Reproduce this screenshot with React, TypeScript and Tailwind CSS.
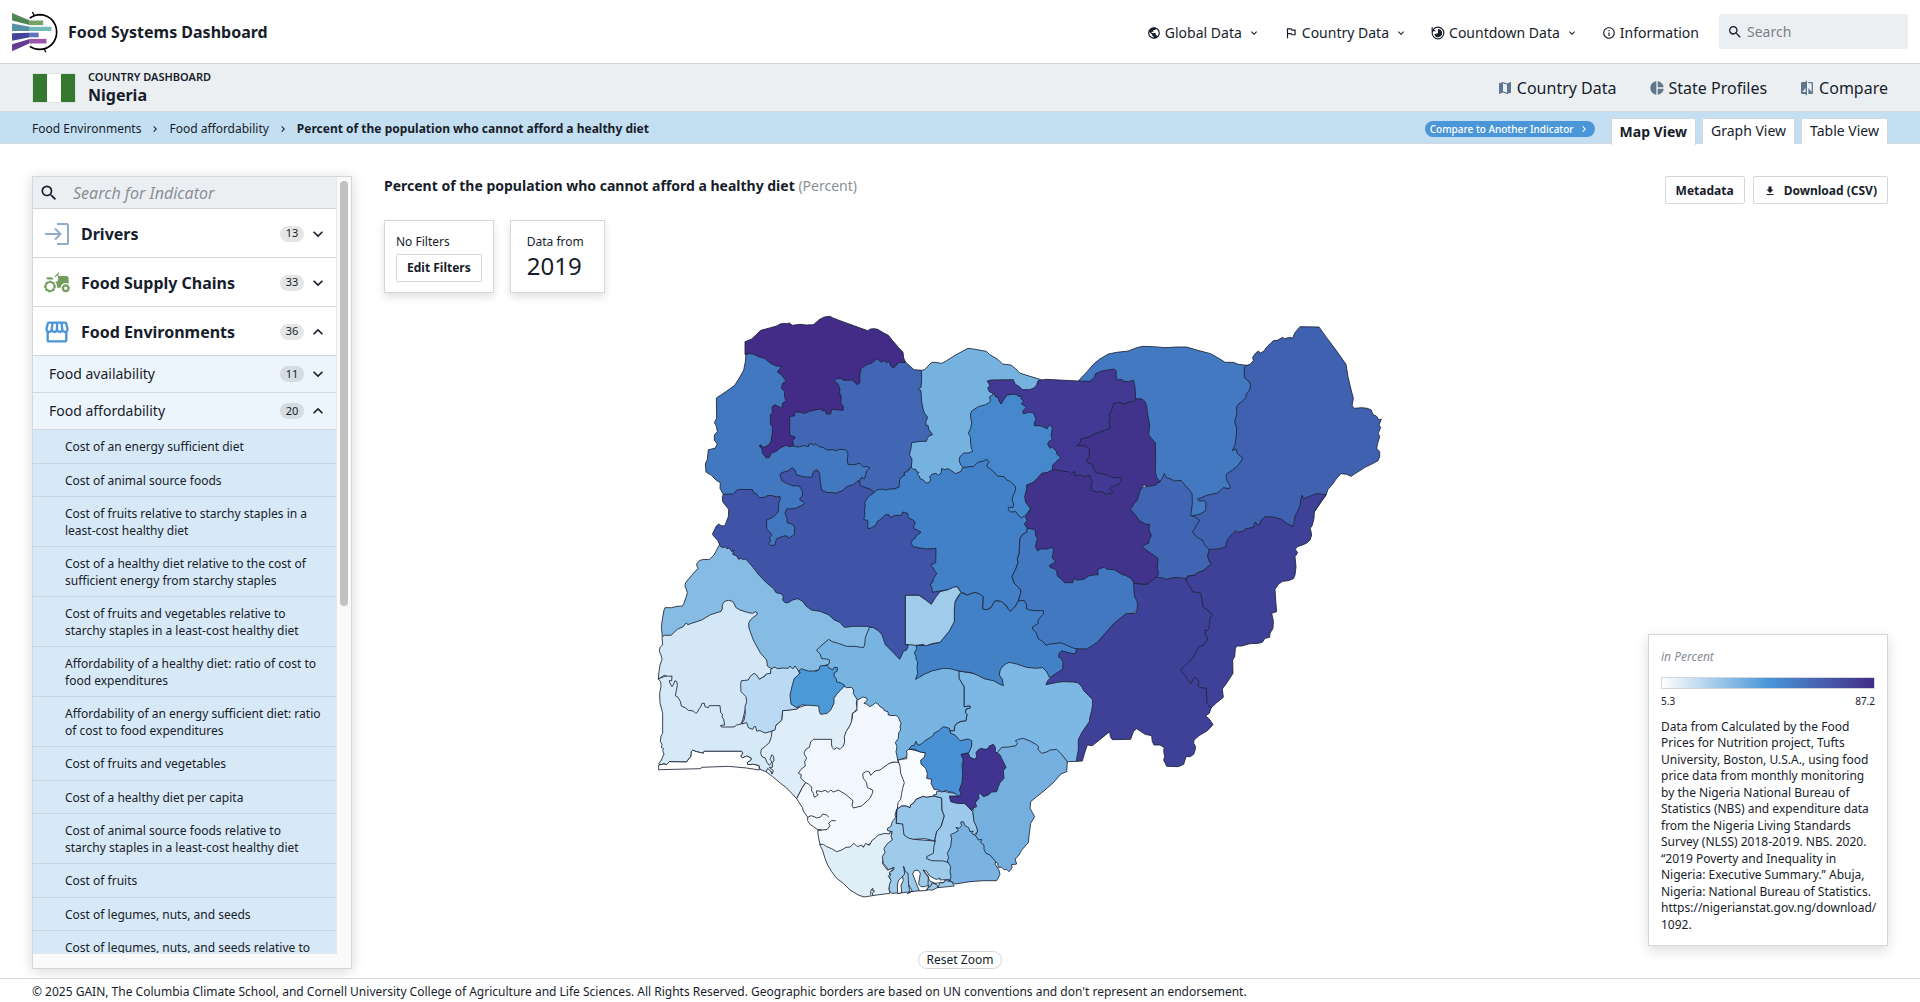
import React from "react";
import {
  MdPublic,
  MdOutlinedFlag,
  MdInfoOutline,
  MdSearch,
  MdMap,
  MdPieChart,
  MdCompare,
  MdExpandMore,
  MdExpandLess,
  MdChevronRight,
  MdAgriculture,
  MdOutlineStorefront,
  MdFileDownload,
} from "react-icons/md";

/* ---------- Map data ---------- */

type Sheet = "nw" | "ne" | "sw" | "se";

const sheetOffset: Record<Sheet, string> = {
  nw: "translate(0 0)",
  ne: "translate(960 0)",
  sw: "translate(0 780)",
  se: "translate(660 780)",
};

type Region = { name: string; fill: string; sheet: Sheet; points: string };

/* Later regions lie over earlier ones, so a shared border is exact on the later region only. */
const regions: Region[] = [
  { name: "Kwara", fill: "#86bce4", sheet: "sw", points: "236,-42 230,-30 222,-15 207,-1 190,-2 178,2 170,12 171,19 174,25 155,46 137,68 135,77 142,98 138,112 131,132 127,138 110,139 95,143 75,143 72,150 68,172 64,200 67,230 200,250 350,350 480,350 560,320 620,290 690,290 700,195 450,80 330,-20 260,-60" },
  { name: "Ogun", fill: "#d6e9f6", sheet: "sw", points: "55,357 62,365 63,380 59,400 60,430 64,444 68,460 68,520 63,528 61,545 66,553 64,562 71,566 68,572 72,582 64,600 56,612 62,615 72,611 80,614 88,605 140,606 148,594 153,590 154,575 158,571 170,575 190,580 192,574 305,574 308,580 302,588 307,594 320,588 333,594 333,600 322,607 323,614 340,613 357,617 360,628 378,635 400,640 420,560 410,500 320,480 200,400 90,345" },
  { name: "Oyo", fill: "#d4e7f7", sheet: "sw", points: "67,230 73,226 93,226 112,208 130,200 135,192 140,189 143,194 152,191 185,180 212,164 243,154 247,146 247,134 254,124 265,121 278,124 283,132 287,142 300,150 325,158 338,160 347,155 352,158 350,165 342,170 331,180 326,190 327,205 340,240 353,264 362,280 380,300 382,318 394,326 392,340 375,348 358,358 400,400 320,430 308,480 303,492 290,495 282,501 244,501 242,496 254,495 251,478 246,470 248,463 242,458 240,437 208,437 205,443 195,440 193,430 186,430 181,443 177,446 173,456 167,460 160,453 145,451 137,444 124,438 121,424 114,412 106,407 109,392 112,376 111,366 105,362 101,372 96,380 90,370 88,362 95,362 96,348 85,349 73,346 63,352 55,357 57,335 60,315 66,298 63,285 58,275 60,262 67,255" },
  { name: "Benue", fill: "#7db7e3", sheet: "se", points: "297,333 340,340 430,290 600,290 680,380 720,440 690,520 650,604 622,605 500,600 400,620 350,620 320,590 290,580 270,540 270,512 283,512 284,500 290,490 303,484 318,482 321,463 316,458 318,447 330,444 330,438 312,440 312,380 297,355" },
  { name: "Kogi", fill: "#78b4e2", sheet: "sw", points: "530,270 538,262 552,250 566,238 577,245 595,250 620,259 645,259 670,263 674,255 676,233 683,215 688,203 740,190 797,270 805,245 850,240 900,300 957,333 957,355 972,380 972,440 990,438 991,444 978,447 976,458 981,463 978,482 963,484 950,490 943,500 943,512 930,512 900,560 840,580 800,592 775,600 740,560 740,500 660,440 620,400 580,370 560,340 545,320 567,312 569,300 560,297 545,296 540,282" },
  { name: "Niger", fill: "#3f53a7", sheet: "nw", points: "250,583 247,590 248,605 258,618 266,628 265,650 258,668 254,678 244,677 236,672 229,678 217,703 224,712 234,722 240,738 248,743 256,740 260,746 268,744 275,755 282,750 278,763 290,768 296,778 303,775 310,779 317,777 328,789 340,803 355,823 380,849 400,865 408,878 422,881 430,888 428,900 435,908 445,908 458,900 474,896 489,905 497,917 514,930 540,934 565,944 574,952 583,960 600,967 607,976 614,982 640,979 680,979 700,983 715,992 725,1003 730,1016 736,1034 760,1058 779,1078 784,1068 790,1054 800,1050 805,1037 797,1033 797,886 837,886 874,913 905,872 950,800 900,600 780,580 704,577 660,545 600,540 450,480 350,540 260,570" },
  { name: "Nasarawa", fill: "#4381c7", sheet: "se", points: "167,357 173,340 171,322 173,305 168,298 168,288 163,280 170,266 168,257 200,256 240,247 265,215 283,185 283,130 303,97 322,105 343,97 360,100 370,110 368,145 380,149 393,143 404,121 418,125 425,121 440,140 451,154 465,140 475,122 530,100 620,160 620,240 660,250 660,300 630,335 568,352 560,335 548,323 530,325 500,322 470,312 447,307 437,312 425,322 420,332 418,345 427,358 430,377 420,373 400,362 375,357 355,347 335,338 318,336 297,333 270,326 250,325 215,333 195,342" },
  { name: "Zamfara", fill: "#4066b4", sheet: "nw", points: "797,187 822,209 845,211 870,250 900,350 900,420 840,480 814,502 797,515 777,561 727,580 704,577 697,572 692,568 674,562 660,556 659,543 640,520 500,480 430,480 430,420 440,320 550,300 560,200 680,150 790,180" },
  { name: "Katsina", fill: "#76b2e0", sheet: "nw", points: "845,211 854,209 864,198 875,187 885,187 905,190 920,182 945,166 984,145 1000,147 1039,154 1048,163 1073,178 1088,192 1113,195 1127,206 1139,219 1170,229 1200,238 1250,260 1200,330 1100,400 1050,520 900,580 820,540 814,502 816,477 808,464 813,446 815,428 840,424 859,424 862,415 867,408 878,404 872,396 866,388 864,376 857,376 858,364 863,352 854,340 850,330 845,306 843,272 834,268 843,262 845,240" },
  { name: "Kaduna", fill: "#4280c8", sheet: "nw", points: "814,502 820,508 828,508 829,515 837,517 832,523 838,528 840,536 850,540 857,548 865,549 872,540 869,530 875,523 887,520 896,526 903,520 905,505 912,509 925,506 947,521 963,514 966,505 985,495 1014,470 1050,460 1100,480 1180,560 1171,627 1200,660 1162,685 1160,697 1148,703 1140,715 1138,745 1138,760 1132,775 1134,788 1128,805 1116,830 1123,850 1135,862 1142,870 1142,880 1135,902 1125,920 1118,926 1111,934 1104,925 1098,915 1085,905 1074,901 1064,903 1053,922 1040,929 1028,927 1030,890 1015,880 1003,877 982,885 972,880 963,877 952,860 935,867 905,872 877,877 876,865 871,852 878,848 880,838 890,820 884,812 879,803 872,795 887,788 888,745 858,747 835,743 820,740 813,730 816,722 826,714 829,707 843,697 833,690 822,687 821,679 826,667 818,659 808,655 804,650 803,640 788,636 785,646 765,646 752,653 747,644 737,644 719,660 712,664 708,675 695,683 684,687 683,662 671,658 675,645 673,630 676,620 674,608 685,590 704,577 710,570 727,567 735,570 750,567 770,566 777,561 779,539 788,528 794,526 792,518 803,514" },
  { name: "Kano", fill: "#4588cc", sheet: "nw", points: "1058,285 1049,290 1051,305 1037,314 1015,320 995,333 991,345 995,368 992,385 985,400 991,410 992,430 994,444 998,454 985,459 971,459 961,468 957,480 962,495 972,503 985,500 1000,500 1014,487 1030,483 1041,478 1047,485 1040,498 1048,505 1061,515 1072,528 1092,530 1100,540 1110,544 1126,559 1127,570 1120,585 1116,600 1121,612 1119,623 1107,621 1104,629 1112,636 1128,635 1134,645 1145,654 1157,645 1171,627 1200,620 1300,560 1300,400 1250,300 1150,276 1120,262 1060,255" },
  { name: "Plateau", fill: "#4178c0", sheet: "ne", points: "202,685 200,697 188,703 180,715 178,745 178,760 172,775 174,788 168,805 156,830 163,850 175,862 182,870 182,880 175,902 193,902 200,915 199,926 208,930 225,932 250,932 250,943 243,950 234,960 235,970 217,981 218,988 228,997 232,1008 235,1017 248,1024 258,1036 265,1033 303,1028 325,1038 345,1046 400,1060 560,900 540,830 400,780 250,670" },
  { name: "Taraba", fill: "#3f4198", sheet: "se", points: "822,70 860,73 895,44 920,40 977,30 1100,100 1080,200 1050,300 1080,400 1053,444 1048,460 1037,467 1050,480 1059,494 1042,512 1017,527 1002,540 1001,550 1006,558 1006,568 1001,583 990,590 978,590 971,613 955,620 920,619 911,600 914,590 911,572 913,563 900,555 882,555 877,545 875,527 855,523 830,506 820,515 812,538 757,539 751,530 749,515 723,536 697,557 682,555 675,575 667,603 649,604 652,585 655,570 655,540 663,522 672,508 688,485 690,470 695,452 698,433 697,418 672,393 665,380 655,369 640,366 610,365 592,367 558,374 563,362 578,347 608,328 609,308 604,295 596,292 597,280 606,272 615,275 620,277 645,282 650,266 680,267 712,247 760,192 798,161 826,160 832,148 832,125 824,110 822,95" },
  { name: "Borno", fill: "#4060b0", sheet: "ne", points: "860,196 870,193 880,182 878,172 888,158 896,153 900,160 912,153 920,141 930,132 940,122 952,121 968,112 974,116 990,112 998,115 1004,99 1020,80 1077,81 1100,113 1130,153 1158,193 1164,230 1172,264 1180,295 1176,318 1184,325 1205,323 1222,325 1234,330 1238,343 1250,349 1257,360 1264,357 1257,375 1262,382 1255,400 1259,410 1253,430 1250,445 1259,455 1259,470 1254,482 1240,490 1215,502 1173,529 1160,523 1143,521 1130,535 1118,552 1104,568 1098,585 1060,640 1030,680 900,720 820,780 745,755 690,720 680,650 700,600 760,560 800,400 830,220" },
  { name: "Yobe", fill: "#4279c1", sheet: "ne", points: "355,243 381,215 400,193 418,178 445,162 470,157 505,153 530,143 548,139 580,140 615,143 650,141 680,141 710,150 752,161 780,177 795,187 820,187 835,193 860,196 853,202 853,233 866,243 872,255 868,272 858,283 858,292 845,305 833,315 829,325 831,340 824,365 830,385 829,405 825,435 817,452 828,447 833,462 848,473 842,486 830,500 818,510 800,522 798,532 802,545 811,558 808,566 790,563 783,570 772,579 740,586 712,598 718,603 732,602 738,608 737,632 720,642 693,649 660,660 600,570 500,500 500,350 450,280 380,300" },
  { name: "Gombe", fill: "#4066b3", sheet: "ne", points: "600,545 608,532 613,521 619,533 630,536 644,543 663,541 672,552 680,561 690,573 696,580 697,610 692,647 707,652 718,660 716,666 708,677 705,686 697,693 702,703 713,713 727,720 735,737 748,748 748,760 743,765 746,780 754,793 740,803 733,811 712,819 705,825 683,829 677,836 660,833 640,833 620,838 610,834 600,833 580,830 530,745 490,640 530,570" },
  { name: "Adamawa", fill: "#3f4198", sheet: "ne", points: "1098,585 1082,606 1063,635 1062,655 1057,675 1051,685 1055,705 1050,720 1042,728 1030,734 1012,740 1006,748 1013,758 1005,770 1008,800 1005,825 1000,836 985,842 968,844 956,852 945,868 947,900 950,935 935,940 940,962 939,985 930,1000 929,1012 915,1015 907,1027 895,1030 870,1031 845,1038 830,1038 826,1046 824,1070 818,1080 819,1120 803,1145 787,1167 790,1192 770,1208 753,1224 741,1210 739,1165 722,1163 714,1158 717,1145 710,1135 702,1132 698,1142 692,1151 675,1127 662,1110 680,1092 698,1075 712,1047 718,1038 728,1038 742,1020 742,1012 735,1005 737,990 742,992 747,985 750,955 758,944 748,935 729,920 727,905 722,880 715,878 698,875 690,860 679,845 679,836 683,829 705,825 712,819 733,811 740,803 754,793 746,780 743,765 748,748 775,747 797,741 799,728 805,715 827,692 832,697 850,694 855,687 880,682 885,666 897,677 904,660 915,650 940,651 965,658 980,670 998,679 1003,665 1005,648 1010,640 1020,618 1022,600 1026,586 1031,596 1070,581" },
  { name: "Jigawa", fill: "#413993", sheet: "ne", points: "82,243 93,240 160,239 165,252 178,260 188,269 210,269 223,263 230,255 234,242 258,238 355,243 390,244 403,232 407,221 425,213 445,210 462,207 469,213 468,225 471,240 483,238 492,244 505,245 520,241 525,260 527,300 520,400 500,540 480,595 440,605 380,590 300,530 277,509 278,495 288,485 302,472 290,462 290,455 276,440 270,445 263,432 266,425 277,418 273,405 277,385 272,376 266,376 262,386 240,377 223,377 223,368 228,358 223,345 220,338 205,337 196,340 189,340 189,332 199,322 184,311 190,306 188,300 182,296 187,290 173,288 170,283 155,283 141,285 132,298 123,312 117,303 115,293 106,290 103,282 88,275 83,263 90,258 86,250" },
  { name: "Bauchi", fill: "#41338c", sheet: "ne", points: "277,510 262,517 245,520 232,535 220,547 200,555 200,567 194,590 197,607 212,627 205,640 196,650 201,662 193,672 202,685 218,687 227,693 226,705 232,715 226,740 233,753 240,747 262,747 270,743 281,745 280,752 277,775 287,785 268,797 272,803 283,806 290,813 292,828 305,838 314,848 338,848 342,835 350,840 372,838 386,828 400,825 415,824 413,812 417,806 433,802 442,808 463,809 483,822 500,828 513,835 522,850 545,852 560,853 578,840 596,824 592,805 594,775 570,758 547,742 556,733 566,730 567,720 574,707 567,690 568,673 558,673 538,662 525,643 511,628 523,610 532,600 538,580 542,567 553,555 562,559 585,556 592,550 600,545 590,533 586,515 587,470 586,428 577,418 566,405 569,375 563,345 560,320 556,306 546,297 527,296 522,304 500,308 495,313 478,307 461,311 457,325 447,345 450,355 447,368 450,385 437,390 400,403 388,411 360,418 363,424 350,437 375,438 388,447 388,470 380,480 385,490 397,493 401,507 408,518 425,522 440,525 455,532 485,534 482,547 468,556 458,560 448,568 460,577 455,583 445,578 438,584 425,574 412,576 395,572 393,560 397,545 388,526 372,530 360,524 347,528 344,514 333,523 325,515 310,514 290,509" },
  { name: "Federal Capital Territory", fill: "#a0cbeb", sheet: "nw", points: "797,886 837,886 857,900 874,913 887,892 900,875 925,869 940,862 952,860 956,868 963,877 953,890 945,905 943,930 943,965 928,993 900,1027 875,1031 857,1038 850,1033 830,1036 797,1033" },
  { name: "Kebbi", fill: "#4178c0", sheet: "nw", points: "318,163 316,185 311,211 298,234 284,256 255,277 229,294 230,355 223,368 229,378 232,395 223,405 223,420 232,432 225,445 205,449 202,478 196,492 198,516 214,526 228,540 241,548 240,565 246,576 250,583 280,582 291,570 303,568 338,569 340,578 349,581 357,593 373,592 382,587 394,586 411,591 419,588 421,597 416,610 415,636 400,651 380,660 380,688 393,700 395,707 388,713 392,722 386,732 391,736 404,736 410,716 425,710 438,707 448,714 463,704 464,681 455,672 441,668 441,655 435,640 440,627 463,626 482,618 494,611 490,605 480,601 480,595 487,588 487,573 478,558 457,557 440,550 426,543 420,525 424,518 444,513 457,503 466,512 469,524 480,527 486,530 515,532 521,514 531,509 539,520 541,547 545,570 560,577 589,579 607,572 620,560 640,554 653,543 660,541 664,532 673,536 676,528 680,513 690,504 681,499 670,501 660,490 642,494 624,494 622,480 624,460 617,449 598,448 590,452 577,449 560,450 551,443 535,439 527,430 523,436 515,431 506,433 505,440 493,437 474,441 461,438 440,425 430,340 470,300 460,220 440,180 340,145" },
  { name: "Sokoto", fill: "#432c87", sheet: "nw", points: "315,163 315,125 335,117 350,103 362,91 385,85 410,78 420,72 433,70 440,71 448,69 457,76 480,73 500,75 520,74 530,66 537,59 553,51 570,49 577,53 600,62 625,71 655,82 683,92 692,87 702,86 713,88 730,98 745,106 757,121 775,142 789,157 791,174 797,187 785,188 777,186 770,195 759,204 752,197 747,183 740,188 733,182 723,187 718,181 710,177 697,188 681,194 663,205 662,215 659,225 660,248 652,254 637,240 612,241 602,235 591,235 582,244 594,252 600,268 598,276 604,292 602,308 610,320 609,331 587,329 576,328 571,342 559,342 555,330 548,333 545,327 530,329 509,334 493,340 477,336 463,337 463,348 449,349 449,404 466,412 458,422 461,438 448,440 439,436 420,444 409,454 393,460 389,472 379,474 367,459 366,447 358,438 361,434 371,442 386,435 393,424 397,398 397,380 391,372 391,345 397,338 396,321 404,314 415,319 425,325 428,309 438,302 433,289 434,275 424,264 428,250 438,243 423,223 412,216 425,199 409,198 392,190 373,175 356,170 342,163 328,161" },
  { name: "Lagos", fill: "#ffffff", sheet: "sw", points: "56,628 56,615 72,612 80,614 88,605 140,606 148,594 153,590 154,575 158,571 170,575 190,580 192,574 305,574 308,580 302,588 307,594 320,588 333,594 333,600 322,607 323,614 340,613 357,617 358,630 320,624 265,619 185,622 183,625" },
  { name: "Ondo", fill: "#dfedf8", sheet: "sw", points: "396,515 408,495 425,480 428,452 465,447 540,420 605,375 620,383 635,382 641,390 640,400 652,420 649,430 652,445 644,455 637,460 635,490 625,505 617,520 615,550 700,600 600,680 497,668 487,683 470,716 455,700 440,684 418,667 398,650 378,635 383,625 392,633 396,642 400,632 388,622 397,622 397,608 402,603 401,590 396,584 390,598 396,606 388,616 380,606 376,594 366,590 362,580 364,568 372,562 388,548 394,530" },
  { name: "Osun", fill: "#b9daf2", sheet: "sw", points: "305,362 325,360 330,350 342,340 350,345 358,358 368,352 375,348 378,342 392,340 392,332 394,326 405,321 412,326 430,324 445,325 450,318 458,327 465,318 476,333 500,400 472,447 450,450 428,452 425,480 415,490 408,495 405,510 390,515 375,519 360,512 350,513 347,500 342,500 338,508 325,503 320,488 305,492 312,480 316,460 315,440 320,425 318,410 303,395 302,375" },
  { name: "Ekiti", fill: "#4c99d8", sheet: "sw", points: "476,333 484,326 495,330 505,333 530,333 538,328 540,318 562,316 566,323 578,330 582,322 592,323 592,333 583,338 582,348 588,355 590,365 605,370 614,376 608,384 600,392 590,403 582,415 582,430 572,450 562,460 542,463 538,455 536,438 510,436 485,435 470,443 453,432 450,405 457,375 463,355 475,345 480,338" },
  { name: "Delta", fill: "#f4f9fe", sheet: "sw", points: "497,668 487,683 470,716 480,732 487,742 490,753 503,772 503,782 510,793 520,800 532,808 545,810 533,812 535,830 540,853 590,880 660,865 760,820 790,740 800,660 775,603 700,620 600,660" },
  { name: "Edo", fill: "#f2f7ff", sheet: "sw", points: "652,420 660,416 668,411 680,414 682,420 672,430 682,433 688,440 697,436 707,428 716,434 722,442 730,445 733,452 744,455 745,465 756,467 768,466 775,472 783,490 780,500 782,510 776,518 775,535 766,548 771,560 768,575 775,607 760,606 748,610 735,619 720,630 705,633 692,646 688,636 680,633 668,641 670,655 680,668 682,683 698,690 698,698 690,715 665,738 640,744 636,735 639,722 630,714 615,702 595,690 580,696 572,690 565,697 555,691 545,695 530,692 529,700 535,704 523,712 520,700 514,690 516,682 505,672 497,668 482,654 484,644 475,640 483,628 496,618 494,605 500,595 492,580 497,568 508,562 512,546 520,538 575,538 574,552 577,563 582,569 590,563 600,568 610,558 614,545 613,530 618,515 625,505 632,492 637,475 638,460 650,452" },
  { name: "Bayelsa", fill: "#e0eef8", sheet: "sw", points: "540,853 550,853 560,860 575,866 590,875 605,870 618,862 630,861 642,850 652,860 665,855 670,862 677,850 688,856 697,840 705,835 715,825 735,820 748,822 752,812 760,850 735,880 727,910 742,930 760,922 745,950 755,960 747,985 750,1000 710,1005 672,1011 655,1005 630,990 610,970 590,955 575,935 563,915 555,895 548,872" },
  { name: "Anambra", fill: "#f8fcff", sheet: "se", points: "115,600 125,598 140,596 141,580 139,573 148,567 200,580 215,660 245,695 222,708 200,712 190,709 180,713 168,718 162,728 152,735 150,743 138,738 125,738 112,747 114,728 122,718 125,700 128,685 133,668 122,640 120,620" },
  { name: "Cross River", fill: "#74afe0", sheet: "se", points: "415,574 425,562 445,561 468,557 473,549 466,543 475,538 490,535 510,543 528,553 536,560 534,568 545,580 560,576 570,570 590,568 605,583 622,605 620,635 603,642 580,668 555,690 530,710 512,725 510,745 524,770 512,790 508,820 505,848 485,870 475,888 465,897 470,912 455,914 456,924 447,935 440,928 433,930 425,922 415,922 413,910 405,905 380,900 340,840 353,813 340,785 338,755 360,650" },
  { name: "Rivers", fill: "#9fcbeb", sheet: "se", points: "110,748 105,765 107,772 97,785 92,800 82,805 83,812 97,815 93,828 97,840 83,850 72,865 75,877 67,890 70,910 80,922 84,930 102,922 101,930 88,937 93,945 88,950 93,962 88,975 87,990 95,1000 130,998 178,992 200,985 235,965 280,962 285,900 300,860 226,843 160,838 125,790 110,790" },
  { name: "Imo", fill: "#96c6ea", sheet: "se", points: "112,747 125,738 138,738 150,743 152,735 162,728 168,718 180,713 190,709 200,712 222,708 245,714 246,750 253,768 243,800 230,815 224,843 195,836 160,838 145,834 132,825 128,792 110,790" },
  { name: "Abia", fill: "#9dcaec", sheet: "se", points: "226,843 222,858 220,880 200,890 200,896 215,902 250,903 266,908 290,880 320,850 353,813 348,797 342,785 338,755 315,731 290,700 268,698 245,692 230,695 230,703 220,705 222,708 245,714 246,750 253,768 243,800 230,815 224,843" },
  { name: "Akwa Ibom", fill: "#7ab3e1", sheet: "se", points: "272,825 275,835 272,860 262,880 266,893 262,903 272,920 270,935 273,950 270,962 285,972 330,965 370,962 410,962 420,943 416,928 405,913 407,905 390,885 378,880 372,868 372,855 362,848 365,838 355,840 348,828 335,820 340,813 330,815 326,803 315,797 310,785 302,786 305,797 298,805 288,802 295,812 285,818" },
  { name: "Ebonyi", fill: "#413490", sheet: "se", points: "303,583 325,580 330,592 345,598 350,590 348,578 352,572 362,565 375,568 384,566 388,558 400,553 406,562 406,575 420,585 425,595 438,622 430,632 432,655 420,668 415,680 410,695 395,696 385,705 370,710 360,700 355,705 357,715 346,728 350,740 340,743 335,752 325,740 315,731 290,730 272,725 268,708 300,708 298,690 308,665 307,625 310,600" },
  { name: "Enugu", fill: "#4891d4", sheet: "se", points: "148,567 155,557 163,556 168,544 174,556 185,551 198,540 218,528 222,520 235,513 250,500 268,505 272,520 285,525 300,542 325,537 335,542 335,558 327,578 303,583 310,600 306,612 308,640 306,668 298,690 303,700 297,710 280,697 268,696 260,692 245,696 235,690 222,688 213,670 215,658 200,655 202,640 197,625 183,612 182,600 193,592 196,578 180,576 165,568" },
];

/* Lagoons, inlets and islands on the coast of the delta. */
const water: string[] = [
  "M113 1000 112 975 116 960 128 950 130 962 123 975 125 997Z",
  "M143 1000 150 998 146 975 156 992Z",
  "M178 992 168 968 158 942 163 932 174 930 181 940 178 957 176 972 183 980 196 980 206 974 202 990Z",
  "M190 930 200 934 208 947 225 957 232 958 240 954 240 960 268 958 264 966 225 970 208 962 205 950Z",
];
const creeks: string[] = [
  "M127 950 134 942 131 920M131 920 136 934 144 940 146 975",
  "M192 934 205 952 204 972",
];
const islands: string[] = [
  "M200 988 214 976 216 968 232 975 234 982 218 990Z",
  "M234 982 240 968 252 968 254 961 275 965 282 977Z",
];
const inlets: string[] = [
  "M503 772 513 767 525 771 530 774 542 771 548 762 560 765 566 771",
  "M586 782 575 782 566 790 570 797 562 808 545 810",
  "M692 1003 693 990 699 985 698 992 704 993 697 999 698 1005",
];

function NigeriaMap() {
  return (
    <svg
      viewBox="-768 21 3792 1800"
      className="block h-auto w-full"
      role="img"
      aria-label="Map of Nigerian states"
    >
      <g stroke="#1c2536" strokeOpacity="0.85" strokeWidth="3" strokeLinejoin="round" strokeLinecap="round">
        {regions.map((r) => (
          <polygon key={r.name} points={r.points} fill={r.fill} transform={sheetOffset[r.sheet]}>
            <title>{r.name}</title>
          </polygon>
        ))}
        <g transform={sheetOffset.se}>
          {water.map((d) => (
            <path key={d} d={d} fill="#ffffff" />
          ))}
          {creeks.map((d) => (
            <path key={d} d={d} fill="none" />
          ))}
          {islands.map((d) => (
            <path key={d} d={d} fill="#9fcbeb" />
          ))}
        </g>
        <g transform={sheetOffset.sw} fill="none">
          {inlets.map((d) => (
            <path key={d} d={d} />
          ))}
        </g>
      </g>
    </svg>
  );
}

/* ---------- Icons ---------- */

function Logo() {
  return (
    <svg viewBox="36 30 140 128" className="h-[42px] w-[46px]" aria-hidden="true">
      <path d="M36 36 90 59V73L36 59Z" fill="#4d8652" />
      <path d="M36 68 90 78V91H36Z" fill="#558fa8" />
      <path d="M36 98 90 96V110L36 121Z" fill="#45449a" />
      <path d="M36 131 90 115V128L36 153Z" fill="#643c94" />
      <path d="M90 59h41v14H90z" fill="#76a361" />
      <path d="M90 78h66v13H90z" fill="#71bcb8" />
      <path d="M90 96h27v14H90z" fill="#5d74bb" />
      <path d="M90 115h51v14H90z" fill="#9a57ab" />
      <path
        d="M90 52C100 44 111 41 122 41C152 43 172 66 172 94C172 124 150 147 120 147C108 147 98 144 90 138"
        fill="none"
        stroke="#000"
        strokeWidth="5"
      />
      <path d="M105 46 98 33M134 145 139 156" fill="none" stroke="#000" strokeWidth="4" />
    </svg>
  );
}

function CountdownIcon() {
  return (
    <svg viewBox="0 0 24 24" className="h-[14px] w-[14px]" fill="none" stroke="currentColor" aria-hidden="true">
      <circle cx="12" cy="12" r="10" strokeWidth="2" />
      <path d="M2 2v6h6" strokeWidth="2" />
      <path d="M12 5a7 7 0 1 1-6.500 9.500L12 12Z" fill="currentColor" stroke="none" />
      <path d="M12 6V12L7 8A6.500 6.500 0 0 1 12 6Z" fill="#ffffff" stroke="none" />
    </svg>
  );
}

function DriversIcon() {
  return (
    <svg viewBox="0 0 24 22" className="h-[22px] w-6" fill="none" stroke="#8dadca" strokeWidth="2" aria-hidden="true">
      <path d="M12 1H22a1 1 0 0 1 1 1V20a1 1 0 0 1-1 1H12" />
      <path d="M0 11H15M10 5.500 15.500 11 10 16.500" />
    </svg>
  );
}

/* ---------- Header ---------- */

const mainNav = [
  { label: "Global Data", icon: <MdPublic className="size-[14px]" />, menu: true },
  { label: "Country Data", icon: <MdOutlinedFlag className="size-[14px]" />, menu: true },
  { label: "Countdown Data", icon: <CountdownIcon />, menu: true },
  { label: "Information", icon: <MdInfoOutline className="size-[14px]" />, menu: false },
];

function Header() {
  return (
    <header className="flex h-16 shrink-0 items-center justify-between border-b border-[#d3d8df] px-3">
      <a href="#home" className="flex items-center gap-[10px] text-base font-bold">
        <Logo />
        Food Systems Dashboard
      </a>
      <div className="flex items-center gap-5">
        <nav className="flex items-center gap-6 pt-[2px]">
          {mainNav.map((item) => (
            <a key={item.label} href="#nav" className="flex items-center gap-1 text-sm">
              {item.icon}
              {item.label}
              {item.menu && <MdExpandMore className="ml-[2px] size-3" />}
            </a>
          ))}
        </nav>
        <label className="flex h-[35px] w-[189px] items-center gap-1 rounded-xs bg-[#ebeff2] pl-2">
          <MdSearch className="size-4 shrink-0" />
          <input
            type="text"
            aria-label="Search"
            placeholder="Search"
            className="w-full bg-transparent pt-px text-sm outline-none placeholder:text-[#7b7f86]"
          />
        </label>
      </div>
    </header>
  );
}

const countryNav = [
  { label: "Country Data", icon: MdMap },
  { label: "State Profiles", icon: MdPieChart },
  { label: "Compare", icon: MdCompare },
];

function CountryBar() {
  return (
    <div className="flex h-12 shrink-0 items-center justify-between border-b border-[#d3d8df] bg-[#ebeff2] px-8">
      <div className="flex items-center gap-3">
        <div className="flex h-[30px] w-11 border border-[#dde3e8]">
          <div className="flex-1 bg-[#35782f]" />
          <div className="flex-1 bg-white" />
          <div className="flex-1 bg-[#35782f]" />
        </div>
        <div className="pb-px">
          <p className="text-[11px] leading-4 font-semibold">COUNTRY DASHBOARD</p>
          <h1 className="text-base leading-5 font-bold">Nigeria</h1>
        </div>
      </div>
      <nav className="flex items-center gap-8">
        {countryNav.map(({ label, icon: Icon }) => (
          <a key={label} href="#section" className="flex items-center gap-1 text-base">
            <Icon className="size-4 text-[#5f778d]" />
            {label}
          </a>
        ))}
      </nav>
    </div>
  );
}

function IndicatorBar() {
  return (
    <div className="flex h-8 shrink-0 items-center justify-between border-b border-[#d3d8df] bg-[#c4dff2] px-8 pt-[2px]">
      <nav aria-label="Breadcrumb" className="flex items-center gap-2 text-xs">
        <a href="#env">Food Environments</a>
        <MdChevronRight className="size-3" />
        <a href="#afford">Food affordability</a>
        <MdChevronRight className="size-3" />
        <span className="font-bold">Percent of the population who cannot afford a healthy diet</span>
      </nav>
      <div className="flex items-center gap-4">
        <button className="flex h-4 items-center gap-1 rounded-full bg-[#4a96d8] px-[5px] text-[10px] leading-4 font-medium text-white">
          Compare to Another Indicator
          <MdChevronRight className="size-3" />
        </button>
        <div className="-mb-[5px] flex gap-[6px] text-sm">
          <button className="h-[27px] rounded-t-xs border border-b-0 border-[#d3d8df] bg-white px-2 font-bold">
            Map View
          </button>
          <button className="h-[26px] rounded-t-xs border border-b-0 border-[#d3d8df] bg-white px-2">
            Graph View
          </button>
          <button className="h-[26px] rounded-t-xs border border-b-0 border-[#d3d8df] bg-white px-2">
            Table View
          </button>
        </div>
      </div>
    </div>
  );
}

/* ---------- Sidebar ---------- */

const indicators = [
  "Cost of an energy sufficient diet",
  "Cost of animal source foods",
  "Cost of fruits relative to starchy staples in a least-cost healthy diet",
  "Cost of a healthy diet relative to the cost of sufficient energy from starchy staples",
  "Cost of fruits and vegetables relative to starchy staples in a least-cost healthy diet",
  "Affordability of a healthy diet: ratio of cost to food expenditures",
  "Affordability of an energy sufficient diet: ratio of cost to food expenditures",
  "Cost of fruits and vegetables",
  "Cost of a healthy diet per capita",
  "Cost of animal source foods relative to starchy staples in a least-cost healthy diet",
  "Cost of fruits",
  "Cost of legumes, nuts, and seeds",
  "Cost of legumes, nuts, and seeds relative to",
];

function Count({ value, open }: { value: number; open: boolean }) {
  const Arrow = open ? MdExpandLess : MdExpandMore;
  return (
    <span className="flex items-center gap-1">
      <span className="flex h-4 w-6 items-center justify-center rounded-full bg-black/10 text-[11px] font-normal">
        {value}
      </span>
      <Arrow className="size-5" />
    </span>
  );
}

type GroupProps = { label: string; count: number; open?: boolean; icon: React.ReactNode };

function Group({ label, count, open = false, icon }: GroupProps) {
  return (
    <button className="flex h-[49px] w-full items-center border-b border-[#d3d8df] bg-white pt-px pr-2 pl-[10px] text-left text-base font-bold">
      <span className="flex w-[38px] shrink-0 items-center">{icon}</span>
      <span className="flex-1 pt-px">{label}</span>
      <Count value={count} open={open} />
    </button>
  );
}

function SubGroup({ label, count, open = false }: { label: string; count: number; open?: boolean }) {
  return (
    <button className="flex h-[37px] w-full items-center justify-between border-b border-[#d3d8df] bg-[#ecf4fc] pr-2 pl-4 text-left text-sm">
      {label}
      <Count value={count} open={open} />
    </button>
  );
}

function Sidebar() {
  return (
    <aside className="flex w-80 shrink-0 border border-[#d3d8df] bg-[#fafafa] pb-[14px] shadow-[0_2px_12px_rgba(0,0,0,0.16)]">
      <div className="min-w-0 flex-1 overflow-hidden border-r border-b border-[#e3e6ea]">
        <label className="flex h-8 items-center gap-3 border-b border-[#d3d8df] bg-[#ebeff2] pl-[6px]">
          <MdSearch className="size-5 shrink-0" />
          <input
            type="text"
            aria-label="Search for Indicator"
            placeholder="Search for Indicator"
            className="w-full bg-transparent pl-[2px] text-base italic outline-none placeholder:text-[#8a8f98]"
          />
        </label>
        <Group label="Drivers" count={13} icon={<span className="pl-[2px]"><DriversIcon /></span>} />
        <Group
          label="Food Supply Chains"
          count={33}
          icon={<MdAgriculture className="size-7 text-[#729d5c]" />}
        />
        <Group
          label="Food Environments"
          count={36}
          open
          icon={<MdOutlineStorefront className="size-7 text-[#4a96d8]" />}
        />
        <SubGroup label="Food availability" count={11} />
        <SubGroup label="Food affordability" count={20} open />
        <ul>
          {indicators.map((name) => (
            <li key={name} className="border-b border-[#c8d5e1] bg-[#d7e8f6]">
              <a href="#indicator" className="block pt-[9px] pr-3 pb-[7px] pl-8 text-xs leading-snug">
                {name}
              </a>
            </li>
          ))}
        </ul>
      </div>
      <div className="w-[14px] shrink-0 pt-1 pl-[3px]">
        <div className="h-[55%] w-2 rounded-full bg-[#c1c1c1]" />
      </div>
    </aside>
  );
}

/* ---------- Main content ---------- */

function Legend() {
  return (
    <section className="mb-[23px] w-60 shrink-0 self-end border border-[#d3d8df] bg-white p-3 shadow-[0_4px_12px_rgba(0,0,0,0.14)]">
      <p className="pt-[2px] text-xs leading-4 text-[#868c96] italic">in Percent</p>
      <div className="mt-3 h-3 border border-[#d3d8df] bg-[linear-gradient(to_right,#ffffff,#4a96d8_50%,#432c87)]" />
      <div className="mt-1 flex justify-between text-[10px] leading-4">
        <span>5.3</span>
        <span>87.2</span>
      </div>
      <p className="mt-[10px] text-xs leading-snug">
        Data from Calculated by the Food Prices for Nutrition project, Tufts University, Boston, U.S.A., using food
        price data from monthly monitoring by the Nigeria National Bureau of Statistics (NBS) and expenditure data from
        the Nigeria Living Standards Survey (NLSS) 2018-2019. NBS. 2020. “2019 Poverty and Inequality in Nigeria:
        Executive Summary.” Abuja, Nigeria: National Bureau of Statistics. https://nigerianstat.gov.ng/download/
        <wbr />
        1092.
      </p>
    </section>
  );
}

function Content() {
  return (
    <main className="flex min-w-0 flex-1 flex-col">
      <div className="flex h-7 shrink-0 items-start justify-between">
        <h2 className="text-sm leading-5 font-bold">
          Percent of the population who cannot afford a healthy diet{" "}
          <span className="font-normal text-[#8a8f98]">(Percent)</span>
        </h2>
        <div className="flex gap-2">
          <button className="h-7 rounded-xs border border-[#d3d8df] bg-white px-[10px] pt-px text-xs font-bold">
            Metadata
          </button>
          <button className="flex h-7 items-center gap-2 rounded-xs border border-[#d3d8df] bg-white px-[10px] pt-px text-xs font-bold">
            <MdFileDownload className="size-3" />
            Download (CSV)
          </button>
        </div>
      </div>
      <div className="mt-4 flex shrink-0 gap-4">
        <div className="h-[73px] border border-[#d3d8df] px-[11px] pt-[13px] shadow-[0_4px_8px_rgba(0,0,0,0.12)]">
          <p className="text-xs leading-4">No Filters</p>
          <button className="mt-1 h-7 rounded-xs border border-[#d3d8df] bg-white px-[10px] text-xs font-bold">
            Edit Filters
          </button>
        </div>
        <div className="h-[73px] border border-[#d3d8df] pt-[13px] pr-5 pl-4 shadow-[0_4px_8px_rgba(0,0,0,0.12)]">
          <p className="text-xs leading-4">Data from</p>
          <p className="text-2xl leading-8">2019</p>
        </div>
      </div>
      <div className="mt-[14px] flex min-h-0 flex-1">
        <div className="flex min-w-0 flex-1 flex-col justify-between">
          <NigeriaMap />
          <div className="flex justify-center pr-28">
            <button className="h-[18px] rounded-full border border-[#d3d8df] bg-white px-2 text-xs leading-4">
              Reset Zoom
            </button>
          </div>
        </div>
        <Legend />
      </div>
    </main>
  );
}

export default function App() {
  return (
    <div className="flex h-screen flex-col bg-white font-['Noto_Sans','Open_Sans',sans-serif] text-[#171d2b]">
      <Header />
      <CountryBar />
      <IndicatorBar />
      <div className="flex min-h-0 flex-1 gap-8 px-8 pt-8 pb-[9px]">
        <Sidebar />
        <Content />
      </div>
      <footer className="h-6 shrink-0 border-t border-[#d3d8df] px-8 text-xs leading-[26px]">
        © 2025 GAIN, The Columbia Climate School, and Cornell University College of Agriculture and Life Sciences. All
        Rights Reserved. Geographic borders are based on UN conventions and don't represent an endorsement.
      </footer>
    </div>
  );
}
